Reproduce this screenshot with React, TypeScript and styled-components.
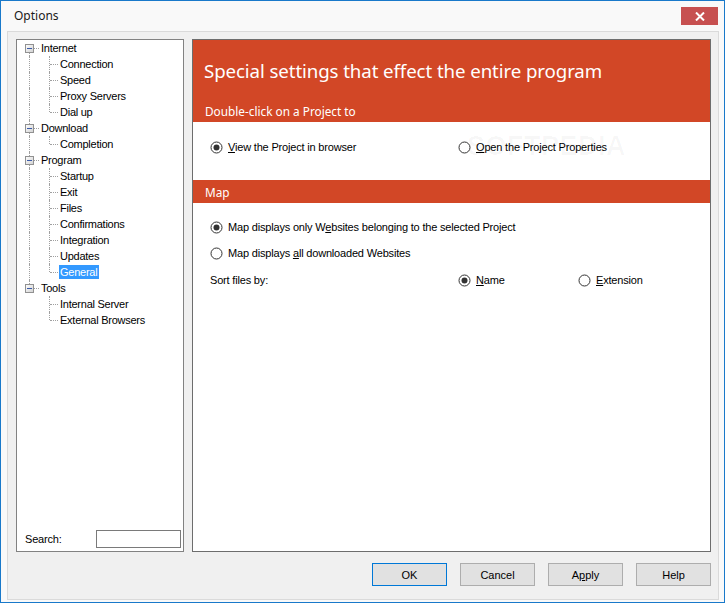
import React from 'react';
import styled, { createGlobalStyle } from 'styled-components';

const Global = createGlobalStyle`
  html, body { margin: 0; padding: 0; background: #fff; }
  body { font-family: "Liberation Sans", Arial, sans-serif; }
  * { box-sizing: border-box; }
`;

const Window = styled.div`
  width: 725px;
  height: 603px;
  border: 1px solid #1979ca;
  background: #f9f9f9;
  display: flex;
  flex-direction: column;
`;

const TitleBar = styled.div`
  height: 30px;
  flex-shrink: 0;
  display: flex;
  align-items: flex-start;
`;

const TitleText = styled.div`
  flex: 1;
  font-family: "Noto Sans", sans-serif;
  font-size: 12px;
  line-height: 16px;
  color: #1a1a1a;
  padding: 7px 0 0 13px;
`;

const CloseButton = styled.div`
  width: 37px;
  height: 18px;
  margin: 6px 6px 0 0;
  background: #c75050;
  display: flex;
  align-items: center;
  justify-content: center;
`;

const Frame = styled.div`
  flex: 1;
  margin: 0 5px 2px 6px;
  border: 1px solid #dadada;
  background: #f0f0f0;
  display: grid;
  grid-template-rows: 1fr auto;
  row-gap: 11px;
  padding: 7px 7px 13px 8px;
`;

const Panels = styled.div`
  display: grid;
  grid-template-columns: 168px 1fr;
  column-gap: 8px;
  min-height: 0;
`;

const TreePanel = styled.div`
  border: 1px solid #828282;
  background: #fff;
  display: flex;
  flex-direction: column;
  justify-content: space-between;
`;

const Tree = styled.div`
  padding: 0 0 0 2px;
  display: flex;
  flex-direction: column;
`;

const TreeRow = styled.div`
  height: 16px;
  display: flex;
  align-items: center;
`;

const Guide = styled.div<{ $up?: boolean; $down?: boolean; $right?: boolean; $w?: number }>`
  position: relative;
  width: ${(p) => p.$w ?? 20}px;
  height: 16px;
  flex-shrink: 0;
  &::before {
    content: '';
    display: ${(p) => (p.$up || p.$down ? 'block' : 'none')};
    position: absolute;
    left: 10px;
    top: ${(p) => (p.$up ? 0 : 8)}px;
    bottom: ${(p) => (p.$down ? 0 : 8)}px;
    border-left: 1px dotted #a0a0a0;
  }
  &::after {
    content: '';
    display: ${(p) => (p.$right ? 'block' : 'none')};
    position: absolute;
    left: 11px;
    right: 0;
    top: 8px;
    border-top: 1px dotted #a0a0a0;
  }
`;

const Expander = styled.svg`
  position: absolute;
  left: 6px;
  top: 4px;
  z-index: 1;
`;

const NodeLabel = styled.span<{ $selected?: boolean }>`
  font-size: 11px;
  letter-spacing: -0.25px;
  line-height: 14px;
  height: 14px;
  padding: 0 2px 0 1px;
  margin-left: 1px;
  white-space: nowrap;
  color: ${(p) => (p.$selected ? '#fff' : '#000')};
  background: ${(p) => (p.$selected ? '#3399ff' : 'transparent')};
`;

const SearchRow = styled.div`
  display: flex;
  align-items: center;
  justify-content: space-between;
  padding: 0 2px 3px 8px;
`;

const SearchLabel = styled.span`
  font-size: 11px;
  letter-spacing: -0.2px;
  color: #000;
`;

const SearchInput = styled.div`
  width: 85px;
  height: 18px;
  border: 1px solid #7a7a7a;
  background: #fff;
`;

const ContentPanel = styled.div`
  position: relative;
  border: 1px solid #6d6d6d;
  background: #fff;
  display: flex;
  flex-direction: column;
  overflow: hidden;
`;

const HeaderBlock = styled.div`
  background: #d24726;
  color: #fff;
  display: flex;
  flex-direction: column;
`;

const HeaderTitle = styled.div`
  height: 60px;
  display: flex;
  align-items: center;
  padding-left: 11px;
  font-family: "Noto Sans", sans-serif;
  font-size: 18.7px;
  letter-spacing: -0.1px;
`;

const SectionBar = styled.div<{ $h: number }>`
  background: #d24726;
  color: #fff;
  height: ${(p) => p.$h}px;
  display: flex;
  align-items: center;
  padding-left: 12px;
  font-family: "Noto Sans", sans-serif;
  font-size: 11.8px;
`;

const Section = styled.div<{ $pt: number; $pb: number }>`
  padding: ${(p) => p.$pt}px 0 ${(p) => p.$pb}px 17px;
  display: flex;
  flex-direction: column;
`;

const OptionGrid = styled.div<{ $mt?: number }>`
  display: grid;
  grid-template-columns: 248px 120px auto;
  align-items: center;
  height: 16px;
  margin-top: ${(p) => p.$mt ?? 0}px;
`;

const OptionCell = styled.div<{ $span?: number }>`
  grid-column: span ${(p) => p.$span ?? 1};
  display: flex;
  align-items: center;
  font-size: 11px;
  letter-spacing: -0.18px;
  color: #000;
  white-space: nowrap;
`;

const RadioMark = styled.svg`
  flex-shrink: 0;
  margin-right: 5px;
`;

const Watermark = styled.div`
  position: absolute;
  left: 274px;
  top: 91px;
  font-family: "Liberation Sans", Arial, sans-serif;
  font-weight: bold;
  font-size: 27px;
  letter-spacing: 0.5px;
  color: rgba(0, 0, 0, 0.03);
  pointer-events: none;
  sup { font-size: 8px; vertical-align: top; }
`;

const ButtonRow = styled.div`
  display: flex;
  justify-content: flex-end;
  column-gap: 13px;
`;

const Button = styled.div<{ $default?: boolean }>`
  width: 75px;
  height: 23px;
  border: 1px solid ${(p) => (p.$default ? '#0078d7' : '#adadad')};
  background: #e1e1e1;
  display: flex;
  align-items: center;
  justify-content: center;
  font-size: 11px;
  color: #000;
`;

const Radio: React.FC<{ checked?: boolean }> = ({ checked }) => (
  <RadioMark width="13" height="13" viewBox="0 0 13 13">
    <circle cx="6.5" cy="6.5" r="5.5" fill="#fff" stroke="#333" strokeWidth="1" />
    {checked && <circle cx="6.5" cy="6.5" r="3" fill="#333" />}
  </RadioMark>
);

const Minus = () => (
  <Expander width="9" height="9" viewBox="0 0 9 9">
    <defs>
      <linearGradient id="bx" x1="0" y1="0" x2="1" y2="1">
        <stop offset="0" stopColor="#ffffff" />
        <stop offset="1" stopColor="#d0d0d0" />
      </linearGradient>
    </defs>
    <rect x="0.5" y="0.5" width="8" height="8" fill="url(#bx)" stroke="#919191" />
    <rect x="2" y="4" width="5" height="1" fill="#3a5aa8" />
  </Expander>
);

type Node = { label: string; children: string[] };
const tree: Node[] = [
  { label: 'Internet', children: ['Connection', 'Speed', 'Proxy Servers', 'Dial up'] },
  { label: 'Download', children: ['Completion'] },
  {
    label: 'Program',
    children: ['Startup', 'Exit', 'Files', 'Confirmations', 'Integration', 'Updates', 'General'],
  },
  { label: 'Tools', children: ['Internal Server', 'External Browsers'] },
];

const Label: React.FC<{ text: string; u: number }> = ({ text, u }) => (
  <span>
    {text.slice(0, u)}
    <u>{text[u]}</u>
    {text.slice(u + 1)}
  </span>
);

export default function App() {
  return (
    <>
      <Global />
      <Window>
        <TitleBar>
          <TitleText>Options</TitleText>
          <CloseButton>
            <svg width="10" height="9" viewBox="0 0 10 9">
              <path d="M1 0.5 L9 8.5 M9 0.5 L1 8.5" stroke="#fff" strokeWidth="2" />
            </svg>
          </CloseButton>
        </TitleBar>
        <Frame>
          <Panels>
            <TreePanel>
              <Tree>
                {tree.map((node, i) => {
                  const lastRoot = i === tree.length - 1;
                  return (
                    <React.Fragment key={node.label}>
                      <TreeRow>
                        <Guide $up={i > 0} $down={!lastRoot} $right>
                          <Minus />
                        </Guide>
                        <NodeLabel>{node.label}</NodeLabel>
                      </TreeRow>
                      {node.children.map((c, j) => {
                        const lastChild = j === node.children.length - 1;
                        return (
                          <TreeRow key={c}>
                            <Guide $up={!lastRoot} $down={!lastRoot} />
                            <Guide $up $down={!lastChild} $right $w={19} />
                            <NodeLabel $selected={c === 'General'}>{c}</NodeLabel>
                          </TreeRow>
                        );
                      })}
                    </React.Fragment>
                  );
                })}
              </Tree>
              <SearchRow>
                <SearchLabel>Search:</SearchLabel>
                <SearchInput />
              </SearchRow>
            </TreePanel>
            <ContentPanel>
              <HeaderBlock>
                <HeaderTitle>Special settings that effect the entire program</HeaderTitle>
                <SectionBar $h={22}>Double-click on a Project to</SectionBar>
              </HeaderBlock>
              <Section $pt={17} $pb={25}>
                <OptionGrid>
                  <OptionCell>
                    <Radio checked />
                    <Label text="View the Project in browser" u={0} />
                  </OptionCell>
                  <OptionCell $span={2}>
                    <Radio />
                    <Label text="Open the Project Properties" u={0} />
                  </OptionCell>
                </OptionGrid>
              </Section>
              <SectionBar $h={23}>Map</SectionBar>
              <Section $pt={16} $pb={0}>
                <OptionGrid>
                  <OptionCell $span={3}>
                    <Radio checked />
                    <Label text="Map displays only Websites belonging to the selected Project" u={19} />
                  </OptionCell>
                </OptionGrid>
                <OptionGrid $mt={10}>
                  <OptionCell $span={3}>
                    <Radio />
                    <Label text="Map displays all downloaded Websites" u={13} />
                  </OptionCell>
                </OptionGrid>
                <OptionGrid $mt={11}>
                  <OptionCell>Sort files by:</OptionCell>
                  <OptionCell>
                    <Radio checked />
                    <Label text="Name" u={0} />
                  </OptionCell>
                  <OptionCell>
                    <Radio />
                    <Label text="Extension" u={0} />
                  </OptionCell>
                </OptionGrid>
              </Section>
              <Watermark>
                SOFTPEDIA<sup>®</sup>
              </Watermark>
            </ContentPanel>
          </Panels>
          <ButtonRow>
            <Button $default>OK</Button>
            <Button>Cancel</Button>
            <Button>
              <Label text="Apply" u={1} />
            </Button>
            <Button>Help</Button>
          </ButtonRow>
        </Frame>
      </Window>
    </>
  );
}
